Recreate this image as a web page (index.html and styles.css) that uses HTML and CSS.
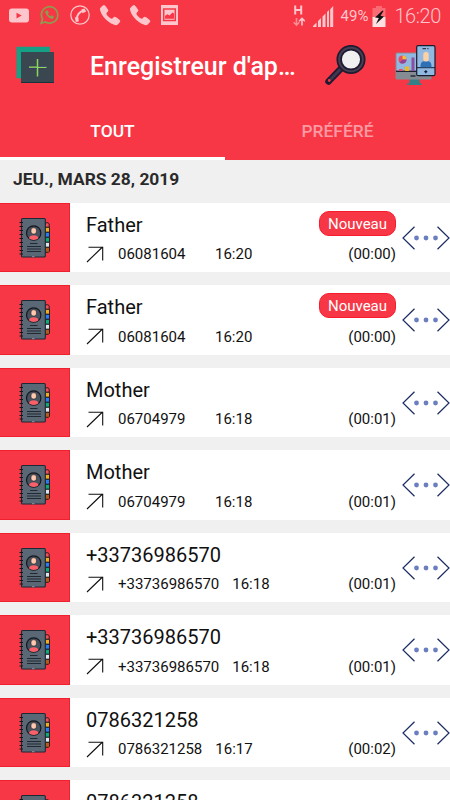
FILE: index.html
```
<!DOCTYPE html>
<html lang="fr">
<head>
    <meta charset="UTF-8">
    <meta name="viewport" content="width=device-width, initial-scale=1.0">
    <title>Enregistreur d'appels</title>
    <link rel="stylesheet" href="styles.css">
</head>
<body>

<!-- Shared icons -->
<svg class="sprite" width="0" height="0">
    <symbol id="icon-phone" viewBox="0 0 24 24">
        <path d="M1 5.500C.8 4.500 4.500.8 5.500 1 6.500 1.200 10.300 6 10.300 7.200 10.300 8.300 8 9.600 8 10.600 8.600 12.600 11.700 15.500 13.800 16.200 14.800 16.300 16 13.900 17.200 13.900 18.400 14 23 17.300 23.200 18.500 23.200 19.600 20.500 22.700 19.200 23 16.500 23.500 11 20.500 7.500 17 3.500 13 1.200 8.500 1 5.500z"/>
    </symbol>
    <symbol id="icon-book" viewBox="0 0 32 42">
        <g stroke="#14181e" stroke-width=".9">
            <path d="M26 5.800h3l1.200 1v3.500H26z" fill="#f4505b"/>
            <path d="M26 10.300h4.500v5H26z" fill="#f0ac22"/>
            <path d="M26 15.300h4.500v5H26z" fill="#2d7cf0"/>
            <path d="M26 20.300h4.500v5H26z" fill="#14a877"/>
            <path d="M26 25.300h4.500v5H26z" fill="#dfe5ef"/>
            <path d="M26 30.300h4.500v4l-1 1H26z" fill="#b85a18"/>
            <rect x="2.500" y="1.500" width="23.800" height="38.500" rx="1" fill="#5a6876" stroke="#1d2935" stroke-width="1.100"/>
        </g>
        <path d="M.5 5.500h3.500M.5 9.500h3.500M.5 13.500h3.500M.5 17.500h3.500M.5 21.500h3.500M.5 25.500h3.500M.5 29.500h3.500M.5 33.500h3.500M.5 37h3.500" stroke="#14181e" stroke-width="1.200"/>
        <circle cx="14.700" cy="16" r="7.200" fill="#46525f" stroke="#14181e" stroke-width="1.200"/>
        <path d="M10 21.300c0-4 9.400-4 9.400 0-2.500 2.200-6.900 2.200-9.400 0z" fill="#fb5f69"/>
        <rect x="12" y="10.800" width="5.400" height="6.200" rx="2.200" fill="#ffc9b0" stroke="#2a2328" stroke-width=".6"/>
        <path d="M11 26.500h7.500M8 29.500h14M8 32h14M8 34.500h14" stroke="#1b222a" stroke-width=".9"/>
        <path d="M13 39.700h2.500" stroke="#8d98a5" stroke-width="1"/>
    </symbol>
    <symbol id="icon-out" viewBox="0 0 18 17">
        <path d="M1 16 16.500 1M2.500 1.300h14.200v13.200" fill="none" stroke="#111" stroke-width="1.100"/>
    </symbol>
    <symbol id="icon-more" viewBox="0 0 48 24">
        <path d="M12.500.8 1 12l11.500 11.200M35.500.8 47 12 35.500 23.200" fill="none" stroke="#1b2c64" stroke-width="1.200"/>
        <g fill="#6b7fc0">
            <circle cx="14.500" cy="12" r="2.400"/>
            <circle cx="24" cy="12" r="2.400"/>
            <circle cx="33.500" cy="12" r="2.400"/>
        </g>
    </symbol>
</svg>

<header class="header">
    <div class="status-bar">
        <div class="status-left">
            <svg width="20" height="15" viewBox="0 0 20 15">
                <rect x="0" y=".5" width="20" height="14" rx="3" fill="#fdc6cc"/>
                <path d="M7.500 4.700v5.800l5.200-2.900z" fill="#f73745"/>
            </svg>
            <svg width="19" height="20" viewBox="0 0 19 20">
                <path d="M1.200 18.300 2.500 14A8.200 8.200 0 1 1 5.500 17z" fill="none" stroke="#8f9a4e" stroke-width="1.700"/>
                <svg x="4.800" y="4.800" width="9.500" height="9.500" fill="#8f9a4e"><use href="#icon-phone"/></svg>
            </svg>
            <svg width="20" height="20" viewBox="0 0 20 20">
                <circle cx="10" cy="10" r="9.200" fill="none" stroke="#fdc6cc" stroke-width="1.200"/>
                <path d="M6.800 15C6.300 10.500 9.500 6.300 14 5.800" fill="none" stroke="#fdc6cc" stroke-width="2"/>
                <path d="M11.300 4.500 14.500 3.500l1.700 3-3.700 1.700zM4.800 12.300l3.700.2.200 4-2.900.4z" fill="#fdc6cc"/>
            </svg>
            <svg class="status-phone" width="22" height="22" fill="#fdc6cc"><use href="#icon-phone"/></svg>
            <svg class="status-phone" width="22" height="22" fill="#fdc6cc"><use href="#icon-phone"/></svg>
            <svg width="17" height="20" viewBox="0 0 17 20">
                <path d="M0 0h17v20H0z" fill="#fdc6cc"/>
                <path d="M2.700 4h11.600v11.500H2.700z" fill="none" stroke="#f73745" stroke-width="1.500"/>
                <path d="M4 13.700v-3l2.500-1.500 2 1.200 3-3 1.500 1v5.300z" fill="#f73745"/>
            </svg>
        </div>
        <div class="status-right">
            <svg width="12" height="22" viewBox="0 0 12 22">
                <path d="M2.200.5v9M8.200.5v9M2.200 5h6" fill="none" stroke="#fdc6cc" stroke-width="2"/>
                <path d="M3.500 13v7M.7 17.200l2.800 3 2.800-3" fill="none" stroke="#fb8c95" stroke-width="1.600"/>
                <path d="M9 20.500v-7M6.200 16.300 9 13.300l2.800 3" fill="none" stroke="#fdc6cc" stroke-width="1.600"/>
            </svg>
            <svg class="signal" width="21" height="21" viewBox="0 0 21 21" fill="#fdc6cc">
                <path d="M0 21v-1l3.500-3.500V21zM5 21v-6l3-3v9zM9.500 21V10.500l3-3V21zM14 21V6l2-2v17zM17.200 21V3.200L20.200 0v21z"/>
            </svg>
            <span class="battery-level">49%</span>
            <svg width="14" height="21" viewBox="0 0 14 21">
                <path d="M4 0h6v2h3.500v9H.5V2H4z" fill="#fa6b76"/>
                <path d="M.5 11h13v10H.5z" fill="#fde0e2"/>
                <path d="M10.500 4.500 3 11.500 6.800 12 4 18 12 10.500 8.500 9.800 11.500 5z" fill="#111"/>
            </svg>
            <span class="clock">16:20</span>
        </div>
    </div>

    <div class="toolbar">
        <svg class="icon-add" width="38" height="38" viewBox="0 0 38 38">
            <path d="M.5.800h33.500v31.500H.5z" fill="#16a085"/>
            <path d="M5 6h33v31H5z" fill="#3a4650"/>
            <path d="M5 36h33v1H5z" fill="#16343d"/>
            <path d="M21.500 13v17.500M13 21.300h17.500" stroke="#8bd65c" stroke-width="1.500"/>
            <path d="M13 22.300h7.500M22.500 20.500h8" stroke="#3a2f7a" stroke-width=".7"/>
        </svg>
        <h1>Enregistreur d'ap…</h1>
        <svg class="icon-search" width="41" height="40" viewBox="0 0 41 40">
            <path d="M3.500 36.500 17 22.500" stroke="#1f1b33" stroke-width="6.500" stroke-linecap="round"/>
            <path d="M5.500 34.500 17 22.500" stroke="#40384f" stroke-width="2.800"/>
            <circle cx="4.300" cy="35.500" r="1.400" fill="#f73745"/>
            <circle cx="26" cy="14.500" r="11.800" fill="#f0f0f1" stroke="#1f1b33" stroke-width="5.500"/>
            <circle cx="26" cy="14.500" r="11.800" fill="none" stroke="#484053" stroke-width="2"/>
        </svg>
        <svg class="icon-devices" width="41" height="41" viewBox="0 0 41 41">
            <path d="M15 33h9l1 5.500h2V40H12v-1.500h2z" fill="#348087"/>
            <rect x=".5" y="7.500" width="36" height="27" rx="1.500" fill="#858b92"/>
            <path d="M1.500 8.500h24v17.500h-24z" fill="#91b8e1"/>
            <path d="M1 26.300h22" stroke="#171c2b" stroke-width="1.300"/>
            <path d="M15.500 31h5" stroke="#171c2b" stroke-width="1.300"/>
            <circle cx="7.500" cy="14.500" r="4" fill="#e94d68"/>
            <path d="M7.500 14.500v-4a4 4 0 0 1 4 4z" fill="#f0c330"/>
            <path d="M7.500 14.500h4a4 4 0 0 1-6.800 2.900z" fill="#8b4699"/>
            <path d="M4 24h3.500v2H4z" fill="#e94d68"/>
            <path d="M10 21.500h4V26h-4z" fill="#f0b91e"/>
            <path d="M16.500 12.500h3V26h-3z" fill="#8b4f9c"/>
            <rect x="21.700" y=".7" width="18.300" height="30" rx="1.500" fill="#91b8e1" stroke="#171c2b" stroke-width="1.200"/>
            <path d="M27.500 3.700h3.500M32.300 3.700h1.200M22 22.700h18" stroke="#171c2b" stroke-width="1"/>
            <path d="M25.500 22.200c0-6 2-6 5.500-6s5.500 0 5.500 6z" fill="#2d70b5"/>
            <rect x="28.300" y="7" width="5.400" height="9.500" rx="2.500" fill="#fdd0a5"/>
            <path d="M29.300 26.700h3M30.800 25.200v3" stroke="#171c2b" stroke-width="1.300"/>
        </svg>
    </div>

    <nav class="tabs">
        <a class="tab active">TOUT</a>
        <a class="tab">PRÉFÉRÉ</a>
    </nav>
</header>

<h2 class="date">JEU., MARS 28, 2019</h2>

<main class="calls">
    <div class="call">
        <div class="avatar"><svg width="32" height="42"><use href="#icon-book"/></svg></div>
        <div class="info">
            <div class="line"><span class="name">Father</span><span class="badge">Nouveau</span></div>
            <div class="line details"><svg width="18" height="17"><use href="#icon-out"/></svg><span class="number">06081604</span><span>16:20</span><span class="duration">(00:00)</span></div>
        </div>
        <svg class="more" width="48" height="24"><use href="#icon-more"/></svg>
    </div>

    <div class="call">
        <div class="avatar"><svg width="32" height="42"><use href="#icon-book"/></svg></div>
        <div class="info">
            <div class="line"><span class="name">Father</span><span class="badge">Nouveau</span></div>
            <div class="line details"><svg width="18" height="17"><use href="#icon-out"/></svg><span class="number">06081604</span><span>16:20</span><span class="duration">(00:00)</span></div>
        </div>
        <svg class="more" width="48" height="24"><use href="#icon-more"/></svg>
    </div>

    <div class="call">
        <div class="avatar"><svg width="32" height="42"><use href="#icon-book"/></svg></div>
        <div class="info">
            <div class="line"><span class="name">Mother</span></div>
            <div class="line details"><svg width="18" height="17"><use href="#icon-out"/></svg><span class="number">06704979</span><span>16:18</span><span class="duration">(00:01)</span></div>
        </div>
        <svg class="more" width="48" height="24"><use href="#icon-more"/></svg>
    </div>

    <div class="call">
        <div class="avatar"><svg width="32" height="42"><use href="#icon-book"/></svg></div>
        <div class="info">
            <div class="line"><span class="name">Mother</span></div>
            <div class="line details"><svg width="18" height="17"><use href="#icon-out"/></svg><span class="number">06704979</span><span>16:18</span><span class="duration">(00:01)</span></div>
        </div>
        <svg class="more" width="48" height="24"><use href="#icon-more"/></svg>
    </div>

    <div class="call">
        <div class="avatar"><svg width="32" height="42"><use href="#icon-book"/></svg></div>
        <div class="info">
            <div class="line"><span class="name">+33736986570</span></div>
            <div class="line details"><svg width="18" height="17"><use href="#icon-out"/></svg><span class="number">+33736986570</span><span>16:18</span><span class="duration">(00:01)</span></div>
        </div>
        <svg class="more" width="48" height="24"><use href="#icon-more"/></svg>
    </div>

    <div class="call">
        <div class="avatar"><svg width="32" height="42"><use href="#icon-book"/></svg></div>
        <div class="info">
            <div class="line"><span class="name">+33736986570</span></div>
            <div class="line details"><svg width="18" height="17"><use href="#icon-out"/></svg><span class="number">+33736986570</span><span>16:18</span><span class="duration">(00:01)</span></div>
        </div>
        <svg class="more" width="48" height="24"><use href="#icon-more"/></svg>
    </div>

    <div class="call">
        <div class="avatar"><svg width="32" height="42"><use href="#icon-book"/></svg></div>
        <div class="info">
            <div class="line"><span class="name">0786321258</span></div>
            <div class="line details"><svg width="18" height="17"><use href="#icon-out"/></svg><span class="number">0786321258</span><span>16:17</span><span class="duration">(00:02)</span></div>
        </div>
        <svg class="more" width="48" height="24"><use href="#icon-more"/></svg>
    </div>

    <div class="call">
        <div class="avatar"><svg width="32" height="42"><use href="#icon-book"/></svg></div>
        <div class="info">
            <div class="line"><span class="name">0786321258</span></div>
        </div>
    </div>
</main>

</body>
</html>
```

FILE: styles.css
```
* {
    box-sizing: border-box;
}

body {
    margin: 0;
    width: 450px;
    height: 800px;
    overflow: hidden;
    display: flex;
    flex-direction: column;
    font-family: Roboto, sans-serif;
    background-color: #f0f0f0;
    color: #111;
}

svg {
    display: block;
    flex-shrink: 0;
}

.sprite {
    position: absolute;
}

.header {
    height: 160px;
    flex-shrink: 0;
    background-color: #f73745;
    color: #fff;
}

/* Status bar */
.status-bar {
    height: 32px;
    display: flex;
    justify-content: space-between;
    color: #fdc6cc;
}

.status-left {
    display: flex;
    align-items: center;
    gap: 11px;
    padding: 0 0 2px 9px;
}

.status-phone {
    margin: 0 -1px 0 -2px;
}

.status-right {
    display: flex;
    align-items: center;
    padding-right: 9px;
}

.signal {
    margin-left: 8px;
}

.battery-level {
    margin: 0 4px 0 7px;
    font-size: 15px;
}

.clock {
    margin-left: 8px;
    font-size: 20px;
    font-weight: 300;
    letter-spacing: -0.4px;
}

/* Toolbar */
.toolbar {
    height: 72px;
    display: flex;
    align-items: center;
    padding: 0 14px 6px 16px;
}

.toolbar h1 {
    width: 208px;
    margin: 4px 0 0 36px;
    font-size: 25px;
    font-weight: 500;
    line-height: 32px;
    white-space: nowrap;
}

.icon-search {
    margin-left: 27px;
}

.icon-devices {
    margin-left: auto;
}

/* Tabs */
.tabs {
    height: 56px;
    display: flex;
}

.tab {
    flex: 1;
    padding-top: 3px;
    border-bottom: 3px solid transparent;
    font-size: 17.4px;
    font-weight: 500;
    line-height: 48px;
    text-align: center;
    color: #fb9aa2;
}

.tab.active {
    color: #fff;
    border-color: #fff;
}

.date {
    height: 42.8px;
    flex-shrink: 0;
    margin: 0;
    padding-left: 13px;
    font-size: 17.4px;
    font-weight: 700;
    line-height: 38px;
    color: #2a2a2a;
}

/* Call list */
.calls {
    display: flex;
    flex-direction: column;
    gap: 13px;
}

.call {
    height: 69.5px;
    flex-shrink: 0;
    display: flex;
    align-items: center;
    background-color: #fff;
}

.avatar {
    width: 70px;
    height: 100%;
    display: flex;
    align-items: center;
    justify-content: center;
    background-color: #f73745;
    border: 1px solid #f0202f;
    border-left: 0;
}

.info {
    width: 326px;
    height: 100%;
    padding: 8px 0 0 16px;
}

.line {
    height: 28px;
    display: flex;
    align-items: center;
}

.name {
    font-size: 20px;
}

.badge {
    width: 77px;
    height: 25px;
    margin: -3px 0 0 auto;
    border-radius: 10px;
    background-color: #f73745;
    border: 1px solid #f81b2d;
    color: #fff;
    font-size: 15px;
    line-height: 24px;
    text-align: center;
}

.details {
    height: 31px;
    font-size: 15px;
}

.number {
    min-width: 84px;
    margin: 0 13px 0 14px;
}

.duration {
    margin-left: auto;
}

.more {
    margin-left: 6px;
}
```
